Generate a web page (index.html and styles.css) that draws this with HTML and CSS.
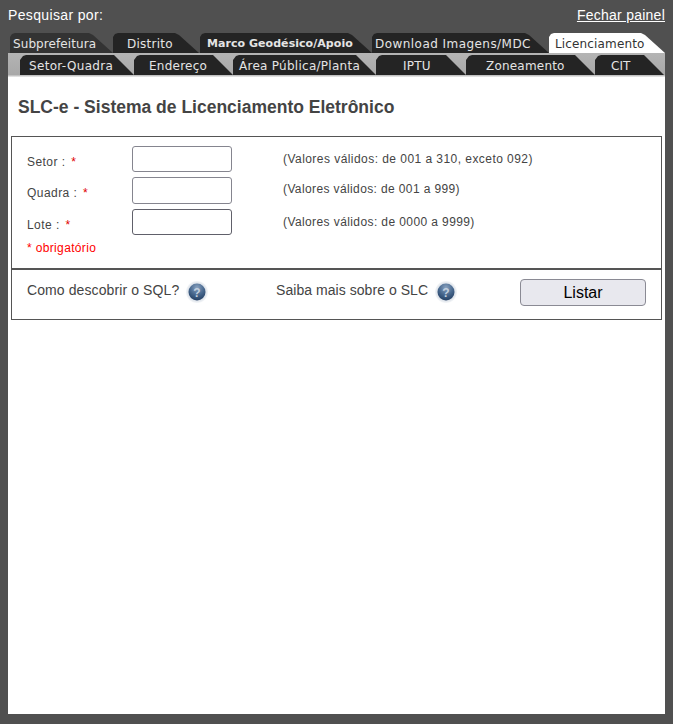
FILE: index.html
```html
<!DOCTYPE html>
<html lang="pt">
<head>
<meta charset="utf-8">
<title>SLC-e</title>
<link rel="stylesheet" href="styles.css">
</head>
<body>
<svg class="defs" width="0" height="0" aria-hidden="true">
  <defs>
    <radialGradient id="ball" cx="50%" cy="25%" r="80%">
      <stop offset="0" stop-color="#8aa3c0"/>
      <stop offset="0.5" stop-color="#4a6a90"/>
      <stop offset="1" stop-color="#1f3a5e"/>
    </radialGradient>
    <radialGradient id="halo" cx="50%" cy="50%" r="50%">
      <stop offset="0.7" stop-color="#d4dbe4"/>
      <stop offset="1" stop-color="#f4f6f8"/>
    </radialGradient>
    <symbol id="help" viewBox="0 0 22 22">
      <circle cx="11" cy="11" r="11" fill="url(#halo)"/>
      <circle cx="11" cy="11" r="8.5" fill="url(#ball)"/>
      <text x="11" y="15.5" text-anchor="middle" class="help-mark">?</text>
    </symbol>
  </defs>
</svg>
<header class="top">
  <span>Pesquisar por:</span>
  <a class="close" href="#">Fechar painel</a>
</header>
<nav class="tabs">
  <div class="row row-main">
    <a class="tab t-sub">Subprefeitura</a>
    <a class="tab t-dis">Distrito</a>
    <a class="tab t-mar">Marco Geodésico/Apoio</a>
    <a class="tab t-dow">Download Imagens/MDC</a>
    <a class="tab t-lic active">Licenciamento</a>
  </div>
  <div class="row row-sub">
    <a class="tab s-set">Setor-Quadra</a>
    <a class="tab s-end">Endereço</a>
    <a class="tab s-are">Área Pública/Planta</a>
    <a class="tab s-ipt">IPTU</a>
    <a class="tab s-zon">Zoneamento</a>
    <a class="tab s-cit">CIT</a>
  </div>
</nav>
<main class="panel">
  <h1>SLC-e - Sistema de Licenciamento Eletrônico</h1>
  <section class="box">
    <div class="fields">
      <label class="lbl l1">Setor : <b>*</b></label><input class="inp i1" type="text"><span class="note n1">(Valores válidos: de 001 a 310, exceto 092)</span>
      <label class="lbl l2">Quadra : <b>*</b></label><input class="inp i2" type="text"><span class="note n2">(Valores válidos: de 001 a 999)</span>
      <label class="lbl l3">Lote : <b>*</b></label><input class="inp i3" type="text"><span class="note n3">(Valores válidos: de 0000 a 9999)</span>
      <span class="req">* obrigatório</span>
    </div>
    <div class="foot">
      <span class="hint h1">Como descobrir o SQL? <svg class="help"><use href="#help"/></svg></span>
      <span class="hint h2">Saiba mais sobre o SLC <svg class="help"><use href="#help"/></svg></span>
      <button class="btn" type="button">Listar</button>
    </div>
  </section>
</main>
</body>
</html>
```

FILE: styles.css
```css
* { box-sizing: border-box; }
html, body { margin: 0; height: 724px; overflow: hidden; }
body { background: #505050; padding: 0 8px 10px; display: flex; flex-direction: column; font-family: "Liberation Sans", Arial, sans-serif; }
.defs { position: absolute; }
.top { height: 33px; padding-top: 7px; display: flex; justify-content: space-between; color: #fff; font-size: 14px; line-height: 16px; }
.top span { letter-spacing: 0.35px; }
.close { color: #fff; text-decoration: underline; letter-spacing: 0.25px; }

.tabs { font-family: "DejaVu Sans", Verdana, sans-serif; font-size: 12px; color: #e4e4e4; }
.row { display: flex; }
.row-main { height: 20px; padding-left: 2px; }
.row-sub { height: 24px; padding: 2px 1px 2px 12px; background: linear-gradient(#b4b4b4, #a8a8a8 90%, #eeeeee); }
.tab { display: block; flex: none; height: 100%; background: #242424; text-align: left; white-space: nowrap; }
.row-main .tab { line-height: 22px; clip-path: polygon(0 4px, 2px 1px, 5px 0, calc(100% - 24px) 0, calc(100% - 20px) 2px, 100% 100%, 0 100%); }
.row-sub .tab { line-height: 22px; clip-path: polygon(0 5px, 3px 1px, 6px 0, calc(100% - 20px) 0, 100% 100%, 0 100%); }
.active { background: #fff; color: #333; }

.t-sub { width: 103px; padding-left: 3px; background: #333; letter-spacing: 0.08px; }
.t-dis { width: 86px; margin-right: 1px; padding-left: 14px; letter-spacing: 0.25px; }
.t-mar { width: 172px; padding-left: 7px; font-size: 11px; font-weight: bold; letter-spacing: 0.05px; }
.t-dow { width: 177px; padding-left: 3px; letter-spacing: 0.45px; }
.t-lic { width: 116px; padding-left: 6px; letter-spacing: 0.15px; }

.s-set { width: 114px; padding-left: 9px; letter-spacing: 0.33px; }
.s-end { width: 99px; padding-left: 15px; letter-spacing: 0.25px; }
.s-are { width: 143px; padding-left: 6px; letter-spacing: 0.27px; }
.s-ipt { width: 90px; padding-left: 27px; letter-spacing: 0.2px; }
.s-zon { width: 129px; padding-left: 20px; letter-spacing: 0.2px; }
.s-cit { width: 69px; padding-left: 16px; }

.panel { flex: 1; background: #fff; padding: 20px 3px 0; color: #444; }
h1 { margin: 0 0 19px 7px; font-size: 17.5px; line-height: 20px; font-weight: bold; color: #444; }
.box { border: 1px solid #555; height: 184px; }
.fields { height: 133px; padding: 9px 0 0 15px; display: grid; grid-template-columns: 105px 151px 1fr; grid-template-rows: 31px 32px 32px auto; border-bottom: 2px solid #555; font-size: 12px; letter-spacing: 0.45px; }
.lbl { padding-top: 9px; }
.l2 { padding-top: 9px; }
.lbl b { color: #e00000; font-weight: normal; margin-left: 2px; }
.inp { width: 100px; height: 26px; border: 1px solid #85858f; border-radius: 3px; background: #fff; padding: 0; margin: 0; }
.i2 { height: 27px; }
.i3 { border-color: #60606a; }
.note { padding-top: 6px; }
.n2 { padding-top: 5px; letter-spacing: 0.38px; }
.n3 { letter-spacing: 0.4px; }
.req { grid-column: 1 / -1; color: #f00; letter-spacing: 0.35px; }
.foot { height: 50px; display: flex; padding-left: 15px; font-size: 14px; color: #444; letter-spacing: 0.1px; }
.hint { display: flex; align-items: flex-start; padding-top: 12px; gap: 7px; line-height: 16px; }
.h1 { width: 249px; }
.h2 { width: 244px; gap: 7px; letter-spacing: 0.05px; }
.help { width: 22px; height: 22px; flex: none; margin-top: -1px; }
.help-mark { font: bold 12px "Liberation Sans", sans-serif; fill: #c3d0df; }
.btn { width: 126px; height: 27px; margin-top: 9px; background: #e8e8ee; border: 1px solid #8a8a94; border-radius: 4px; font: 16px "Liberation Sans", sans-serif; color: #000; padding: 0; }
```
